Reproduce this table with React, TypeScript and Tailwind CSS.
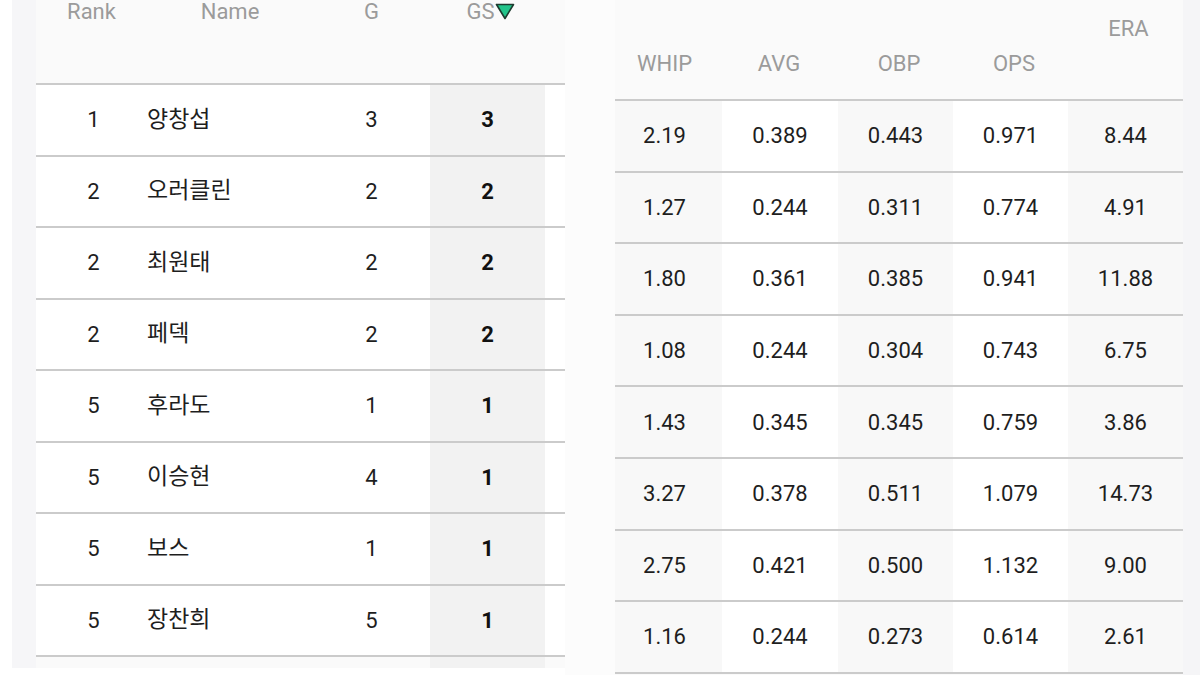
import React from 'react'

interface LeftRow {
  rank: number
  name: string
  g: number
  gs: number
}

interface RightRow {
  whip: string
  avg: string
  obp: string
  ops: string
  era: string
}

const leftRows: LeftRow[] = [
  { rank: 1, name: '양창섭', g: 3, gs: 3 },
  { rank: 2, name: '오러클린', g: 2, gs: 2 },
  { rank: 2, name: '최원태', g: 2, gs: 2 },
  { rank: 2, name: '페덱', g: 2, gs: 2 },
  { rank: 5, name: '후라도', g: 1, gs: 1 },
  { rank: 5, name: '이승현', g: 4, gs: 1 },
  { rank: 5, name: '보스', g: 1, gs: 1 },
  { rank: 5, name: '장찬희', g: 5, gs: 1 },
]

const rightRows: RightRow[] = [
  { whip: '2.19', avg: '0.389', obp: '0.443', ops: '0.971', era: '8.44' },
  { whip: '1.27', avg: '0.244', obp: '0.311', ops: '0.774', era: '4.91' },
  { whip: '1.80', avg: '0.361', obp: '0.385', ops: '0.941', era: '11.88' },
  { whip: '1.08', avg: '0.244', obp: '0.304', ops: '0.743', era: '6.75' },
  { whip: '1.43', avg: '0.345', obp: '0.345', ops: '0.759', era: '3.86' },
  { whip: '3.27', avg: '0.378', obp: '0.511', ops: '1.079', era: '14.73' },
  { whip: '2.75', avg: '0.421', obp: '0.500', ops: '1.132', era: '9.00' },
  { whip: '1.16', avg: '0.244', obp: '0.273', ops: '0.614', era: '2.61' },
]

const font = "font-['Roboto','Noto_Sans_CJK_KR',sans-serif]"

// sort-descending marker next to the GS header
const SortDown = () => (
  <svg width="20" height="17" viewBox="0 0 20 17" className="mt-[2px] shrink-0">
    <path d="M1.5 1.5 H18.5 L10 15.5 Z" fill="#22c48a" stroke="#1d3b2f" strokeWidth="1.6" strokeLinejoin="round" />
  </svg>
)

const LeftTable = () => (
  <div className="w-[529px] h-[668px] bg-[#fafafa] flex flex-col">
    <div className="h-[83px] flex text-[22px] text-[#9b9b9b] leading-none">
      <div className="w-[111px] text-center pt-[1px]">Rank</div>
      <div className="w-[166px] text-center pt-[1px]">Name</div>
      <div className="w-[117px] text-center pt-[1px]">G</div>
      <div className="w-[115px] flex justify-center items-start pt-[1px] pl-[6px]">
        <span>GS</span>
        <SortDown />
      </div>
    </div>
    {leftRows.map((r, i) => (
      <div key={i} className="h-[71.5px] flex border-t-2 border-[#cbcbcb] bg-white text-[22px] text-[#1e1e1e]">
        <div className="w-[111px] flex items-center justify-center pl-[4px]">{r.rank}</div>
        <div className="w-[166px] flex items-center text-[23px]">{r.name}</div>
        <div className="w-[117px] flex items-center justify-center">{r.g}</div>
        <div className="w-[115px] flex items-center justify-center bg-[#f2f2f2] font-bold text-[#111]">{r.gs}</div>
        <div className="flex-1" />
      </div>
    ))}
    <div className="flex-1 flex border-t-2 border-[#cbcbcb]">
      <div className="w-[394px]" />
      <div className="w-[115px] bg-[#f2f2f2]" />
    </div>
  </div>
)

const RightTable = () => (
  <div className="w-[568px] h-[675px] flex flex-col bg-[#fafafa]">
    <div className="h-[99px] flex text-[22px] text-[#9b9b9b] leading-none">
      <div className="w-[99px] flex items-end justify-center pb-[24px]">WHIP</div>
      <div className="w-[130px] flex items-end justify-center pb-[24px]">AVG</div>
      <div className="w-[110px] flex items-end justify-center pb-[24px]">OBP</div>
      <div className="w-[120px] flex items-end justify-center pb-[24px]">OPS</div>
      <div className="flex-1 flex justify-center pt-[18px]">ERA</div>
    </div>
    {rightRows.map((r, i) => (
      <div key={i} className="h-[71.6px] flex border-t-2 border-[#cbcbcb] text-[22px] text-[#1e1e1e]">
        <div className="w-[107px] flex items-center justify-center bg-[#f8f8f8] pr-[8px]">{r.whip}</div>
        <div className="w-[116px] flex items-center justify-center bg-white">{r.avg}</div>
        <div className="w-[115px] flex items-center justify-center bg-[#f8f8f8]">{r.obp}</div>
        <div className="w-[115px] flex items-center justify-center bg-white">{r.ops}</div>
        <div className="w-[115px] flex items-center justify-center bg-[#f8f8f8]">{r.era}</div>
      </div>
    ))}
    <div className="flex-1 border-t-2 border-[#cbcbcb]" />
  </div>
)

export default function App() {
  return (
    <div className={`w-[1200px] h-[675px] overflow-hidden bg-white flex ${font}`}>
      <div className="w-[12px]" />
      <div className="w-[24px] h-[668px] bg-[#f6f6f8]" />
      <LeftTable />
      <div className="w-[50px] bg-[#fcfcfc]" />
      <RightTable />
      <div className="flex-1 bg-[#f5f5f7]" />
    </div>
  )
}
